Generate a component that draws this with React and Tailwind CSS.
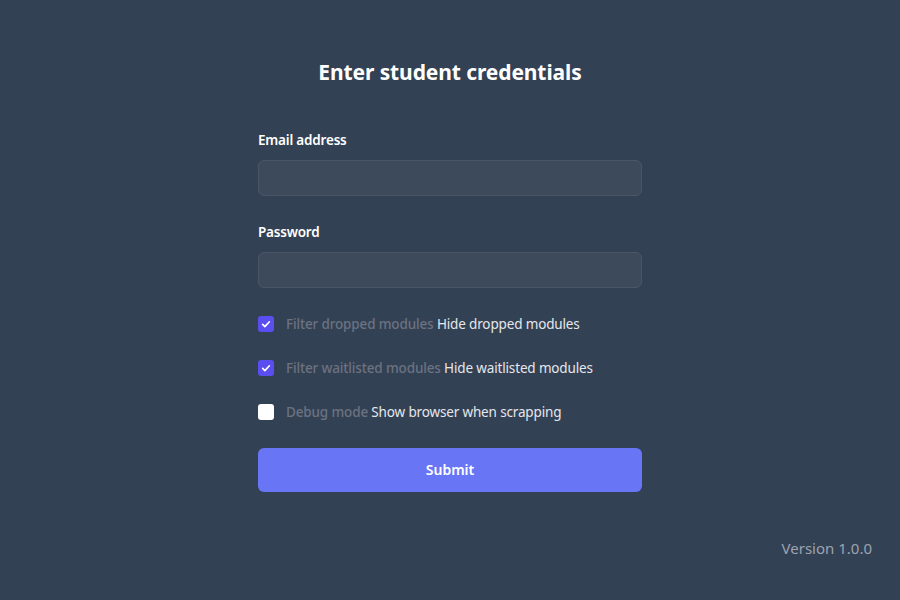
import { useState } from "react";

function Check({ checked, onChange }) {
  return (
    <button
      type="button"
      onClick={onChange}
      className={
        "w-4 h-4 rounded-[3px] flex items-center justify-center shrink-0 " +
        (checked ? "bg-[#5b4ef0]" : "bg-white")
      }
    >
      {checked && (
        <svg viewBox="0 0 16 16" className="w-3 h-3" fill="none" stroke="white" strokeWidth="2.2" strokeLinecap="round" strokeLinejoin="round">
          <path d="M3.5 8.5l3 3 6-6.5" />
        </svg>
      )}
    </button>
  );
}

function Option({ title, desc, checked, onChange }) {
  return (
    <label className="flex items-center gap-3 h-5 text-[13.5px] tracking-[-0.15px]">
      <Check checked={checked} onChange={onChange} />
      <span>
        <span className="font-medium text-[#6b7280]">{title}</span>{" "}
        <span className="text-[#e5e7eb]">{desc}</span>
      </span>
    </label>
  );
}

export default function App() {
  const [dropped, setDropped] = useState(true);
  const [waitlisted, setWaitlisted] = useState(true);
  const [debug, setDebug] = useState(false);

  return (
    <div className="h-screen w-full bg-[#334155] flex flex-col font-['Noto_Sans','Open_Sans',sans-serif] text-white">
      <div className="flex-1 pt-[58px]">
        <div className="w-96 mx-auto flex flex-col">
          <h1 className="text-[21px] leading-7 font-bold text-center tracking-[-0.1px]">Enter student credentials</h1>

          <label className="mt-[44px] text-[13.5px] leading-5 font-semibold tracking-[-0.2px]">Email address</label>
          <input
            type="email"
            className="mt-[10px] h-9 rounded-md bg-[#3c4a5c] border border-[#4a5668] px-3 text-sm outline-none"
          />

          <label className="mt-[26px] text-[13.5px] leading-5 font-semibold tracking-[-0.2px]">Password</label>
          <input
            type="password"
            className="mt-[10px] h-9 rounded-md bg-[#3c4a5c] border border-[#4a5668] px-3 text-sm outline-none"
          />

          <div className="mt-[26px] flex flex-col gap-6">
            <Option title="Filter dropped modules" desc="Hide dropped modules" checked={dropped} onChange={() => setDropped(!dropped)} />
            <Option title="Filter waitlisted modules" desc="Hide waitlisted modules" checked={waitlisted} onChange={() => setWaitlisted(!waitlisted)} />
            <Option title="Debug mode" desc="Show browser when scrapping" checked={debug} onChange={() => setDebug(!debug)} />
          </div>

          <button className="mt-[26px] h-11 rounded-md bg-[#6875f5] text-sm font-semibold text-white">
            Submit
          </button>
        </div>
      </div>
      <div className="flex justify-end pr-7 pb-[42px]">
        <span className="text-[15px] leading-5 text-[#9ca3af]">Version 1.0.0</span>
      </div>
    </div>
  );
}
